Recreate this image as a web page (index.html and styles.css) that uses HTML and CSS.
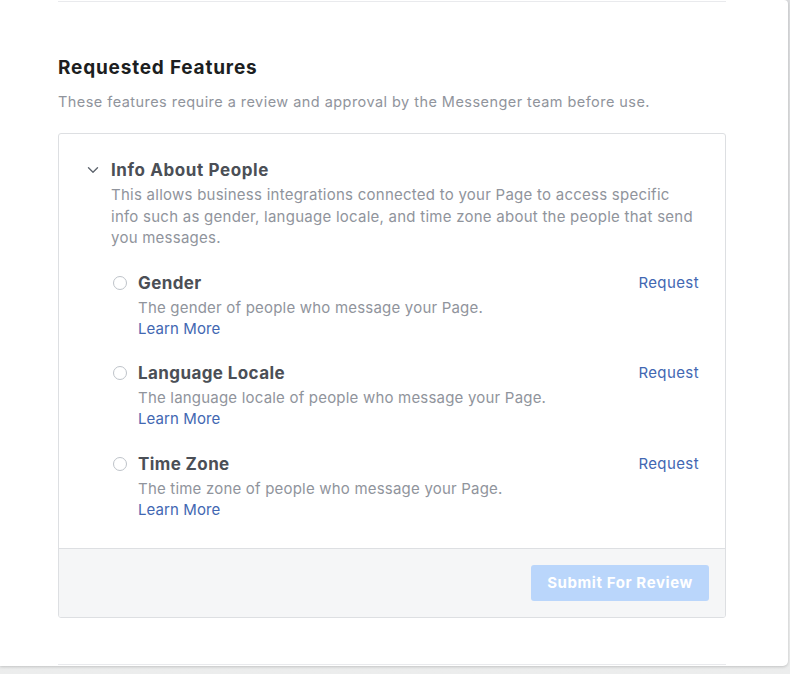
FILE: index.html
```html
<!DOCTYPE html>
<html lang="en">
<head>
<meta charset="utf-8">
<title>Requested Features</title>
<link rel="stylesheet" href="styles.css">
</head>
<body>
<div class="card">
  <div class="prev-divider"></div>
  <h2 class="heading">Requested Features</h2>
  <p class="subtitle">These features require a review and approval by the Messenger team before use.</p>
  <div class="box">
    <div class="box-body">
      <div class="group-head">
        <svg class="chevron" width="14" height="14" viewBox="0 0 14 14"><path d="M2.5 4.8 L7 9.2 L11.5 4.8" fill="none" stroke="#606770" stroke-width="1.4" stroke-linecap="round" stroke-linejoin="round"/></svg>
        <span class="group-title">Info About People</span>
      </div>
      <p class="group-desc">This allows business integrations connected to your Page to access specific info such as gender, language locale, and time zone about the people that send you messages.</p>
      <div class="items">
        <div class="item">
          <span class="radio"></span>
          <div class="item-main">
            <div class="item-title">Gender</div>
            <div class="item-desc">The gender of people who message your Page.</div>
            <a class="link" href="#">Learn More</a>
          </div>
          <a class="request" href="#">Request</a>
        </div>
        <div class="item">
          <span class="radio"></span>
          <div class="item-main">
            <div class="item-title">Language Locale</div>
            <div class="item-desc">The language locale of people who message your Page.</div>
            <a class="link" href="#">Learn More</a>
          </div>
          <a class="request" href="#">Request</a>
        </div>
        <div class="item">
          <span class="radio"></span>
          <div class="item-main">
            <div class="item-title">Time Zone</div>
            <div class="item-desc">The time zone of people who message your Page.</div>
            <a class="link" href="#">Learn More</a>
          </div>
          <a class="request" href="#">Request</a>
        </div>
      </div>
    </div>
    <div class="box-footer">
      <button class="submit" disabled>Submit For Review</button>
    </div>
  </div>
  <div class="next-divider"></div>
</div>
</body>
</html>
```
FILE: styles.css
```css
html, body {
  margin: 0;
  padding: 0;
}
body {
  width: 790px;
  height: 674px;
  overflow: hidden;
  background: linear-gradient(#dcdddf, #eceded);
  font-family: Inter, "Helvetica Neue", Arial, sans-serif;
  -webkit-font-smoothing: antialiased;
}
.card {
  width: 788px;
  height: 666px;
  background: #fff;
  border-radius: 0 4px 5px 0;
  box-shadow: 0 1px 3px rgba(0, 0, 0, 0.18);
  box-sizing: border-box;
  padding: 0 62px 0 58px;
  display: flex;
  flex-direction: column;
}
.prev-divider {
  height: 1px;
  margin-top: 1px;
  background: #e9eaed;
}
.heading {
  margin: 54px 0 0;
  font-size: 19px;
  line-height: 24px;
  font-weight: 700;
  letter-spacing: 0.8px;
  color: #1c1e21;
}
.subtitle {
  margin: 13px 0 0;
  font-size: 14.5px;
  line-height: 18px;
  letter-spacing: 0.45px;
  color: #90949c;
}
.box {
  margin-top: 22px;
  border: 1px solid #dddfe2;
  border-radius: 3px;
  overflow: hidden;
}
.box-body {
  padding: 26px 26px 28px 27px;
}
.group-head {
  display: flex;
  align-items: center;
  gap: 11px;
  height: 20px;
}
.chevron {
  display: block;
}
.group-title {
  font-size: 17px;
  line-height: 20px;
  font-weight: 700;
  letter-spacing: 0.6px;
  color: #4b4f56;
}
.group-desc {
  margin: 4px 4px 0 25px;
  font-size: 15px;
  line-height: 21.5px;
  letter-spacing: 0.25px;
  color: #90949c;
}
.items {
  display: flex;
  flex-direction: column;
  gap: 24.5px;
  margin: 24px 0 0 27px;
}
.item {
  display: flex;
  align-items: flex-start;
}
.radio {
  flex: none;
  width: 12px;
  height: 12px;
  border: 1px solid #bec3c9;
  border-radius: 50%;
  margin-top: 3px;
  margin-right: 11px;
}
.item-main {
  flex: 1;
  display: flex;
  flex-direction: column;
}
.item-title {
  font-size: 17px;
  line-height: 20px;
  font-weight: 700;
  letter-spacing: 0.4px;
  color: #4b4f56;
}
.item-desc {
  margin-top: 4px;
  font-size: 15px;
  line-height: 21px;
  letter-spacing: 0.2px;
  color: #90949c;
}
.link {
  align-self: flex-start;
  font-size: 15px;
  line-height: 21px;
  letter-spacing: 0.1px;
  color: #4267b2;
  text-decoration: none;
}
.request {
  font-size: 15px;
  line-height: 20px;
  letter-spacing: 0.4px;
  color: #4267b2;
  text-decoration: none;
}
.box-footer {
  display: flex;
  justify-content: flex-end;
  padding: 16px;
  background: #f5f6f7;
  border-top: 1px solid #dddfe2;
}
.submit {
  width: 178px;
  height: 36px;
  border: none;
  border-radius: 3px;
  background: #bad6fb;
  color: #fff;
  font-family: inherit;
  font-size: 15px;
  font-weight: 700;
  letter-spacing: 0.6px;
}
.next-divider {
  margin-top: auto;
  height: 1px;
  background: #e9eaed;
  margin-bottom: 1px;
}
```
